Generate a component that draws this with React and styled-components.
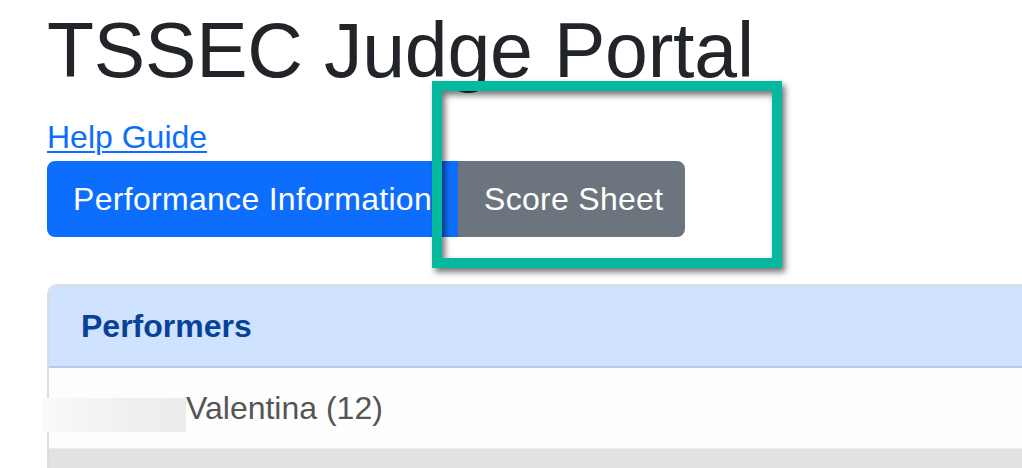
import React from 'react';
import styled, { createGlobalStyle } from 'styled-components';

const GlobalStyle = createGlobalStyle`
  html, body {
    margin: 0;
    padding: 0;
    background: #fff;
    overflow: hidden;
  }
  body {
    font-family: "Liberation Sans", Arial, sans-serif;
    color: #212529;
  }
`;

const Page = styled.div`
  position: relative;
  padding: 4px 0 0 47px;
  height: 468px;
  box-sizing: border-box;
  overflow: hidden;
`;

const Title = styled.h1`
  margin: 0;
  font-size: 77px;
  font-weight: 500;
  line-height: 1.2;
  letter-spacing: -0.2px;
  color: #212529;
`;

const HelpLink = styled.a`
  display: inline-block;
  margin-top: 17px;
  font-size: 32px;
  line-height: 48px;
  color: #0d6efd;
  text-decoration: underline;
  text-underline-offset: 3px;
  text-decoration-thickness: 2px;
`;

const ButtonGroup = styled.div`
  display: flex;
`;

const TabButton = styled.button`
  font-family: inherit;
  font-size: 32px;
  line-height: 48px;
  letter-spacing: 0.3px;
  padding: 12px 24px;
  border: 2px solid ${(p) => (p.$active ? '#0d6efd' : '#6c757d')};
  background: ${(p) => (p.$active ? '#0d6efd' : '#6c757d')};
  color: #fff;
  border-radius: ${(p) => (p.$first ? '8px 0 0 8px' : '0 8px 8px 0')};
  width: ${(p) => p.$w}px;
  text-align: left;
  white-space: nowrap;
  overflow: hidden;
`;

const Card = styled.div`
  margin-top: 47px;
  margin-right: -30px;
  border: 2px solid #dcdcdc;
  border-radius: 10px 10px 0 0;
`;

const CardHeader = styled.div`
  background: #cfe2ff;
  border-bottom: 2px solid #b6cbec;
  border-radius: 8px 8px 0 0;
  padding: 16px 32px;
  font-size: 32px;
  line-height: 48px;
  font-weight: 700;
  color: #084298;
`;

const ListItem = styled.div`
  background: ${(p) => (p.$muted ? '#e2e2e3' : '#fdfdfd')};
  padding: 16px 32px;
  font-size: 32px;
  line-height: 48px;
  color: #555;
  border-bottom: 1px solid #ececec;
  white-space: nowrap;
`;

const Redacted = styled.span`
  display: inline-block;
  vertical-align: -13px;
  width: 144px;
  height: 34px;
  margin-left: -39px;
  background: linear-gradient(90deg, #fafafa 0%, #f1f1f1 50%, #ebebeb 100%);
`;

const Highlight = styled.div`
  position: absolute;
  left: 432px;
  top: 81px;
  width: 350px;
  height: 187px;
  box-sizing: border-box;
  border: 10px solid #04b99d;
  filter: drop-shadow(3px 4px 3px rgba(0, 0, 0, 0.55));
  pointer-events: none;
`;

export default function App() {
  return (
    <>
      <GlobalStyle />
      <Page>
        <Title>TSSEC Judge Portal</Title>
        <HelpLink href="#">Help Guide</HelpLink>
        <ButtonGroup>
          <TabButton $active $first $w={411}>Performance Information</TabButton>
          <TabButton $w={227}>Score Sheet</TabButton>
        </ButtonGroup>
        <Card>
          <CardHeader>Performers</CardHeader>
          <ListItem>
            <Redacted />Valentina (12)
          </ListItem>
          <ListItem $muted>&nbsp;</ListItem>
        </Card>
        <Highlight />
      </Page>
    </>
  );
}
